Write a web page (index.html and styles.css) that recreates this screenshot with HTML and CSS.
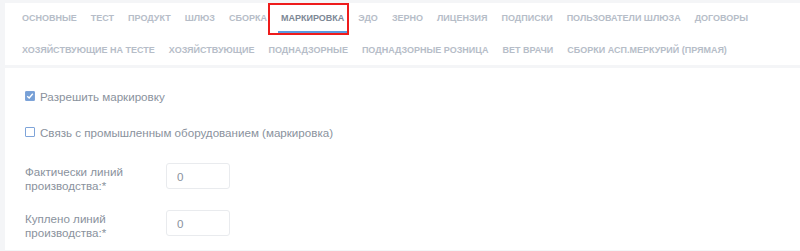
FILE: index.html
```html
<!DOCTYPE html>
<html>
<head>
    <title>Маркировка</title>
    <link rel="stylesheet" href="styles.css">
</head>
<body>
    <div class="tabs-card">
        <div class="tabs">
            <a class="tab">Основные</a>
            <a class="tab">Тест</a>
            <a class="tab">Продукт</a>
            <a class="tab">Шлюз</a>
            <a class="tab">Сборка</a>
            <a class="tab active">Маркировка</a>
            <a class="tab">ЭДО</a>
            <a class="tab">Зерно</a>
            <a class="tab">Лицензия</a>
            <a class="tab">Подписки</a>
            <a class="tab">Пользователи шлюза</a>
            <a class="tab">Договоры</a>
            <a class="tab">Хозяйствующие на тесте</a>
            <a class="tab">Хозяйствующие</a>
            <a class="tab">Поднадзорные</a>
            <a class="tab">Поднадзорные розница</a>
            <a class="tab">Вет врачи</a>
            <a class="tab">Сборки АСП.Меркурий (прямая)</a>
        </div>
    </div>

    <div class="content-card">
        <label class="check-row">
            <span class="checkbox checked">
                <svg width="8" height="8" viewBox="0 0 8 8"><path d="M1.2 4.2 L3.2 6 L6.8 1.8" fill="none" stroke="#fff" stroke-width="1.4"/></svg>
            </span>
            Разрешить маркировку
        </label>
        <label class="check-row">
            <span class="checkbox"></span>
            Связь с промышленным оборудованием (маркировка)
        </label>

        <div class="form-row">
            <div class="form-label">Фактически линий производства:*</div>
            <input type="text" class="form-input" value="0">
        </div>
        <div class="form-row">
            <div class="form-label">Куплено линий производства:*</div>
            <input type="text" class="form-input" value="0">
        </div>
    </div>
</body>
</html>
```

FILE: styles.css
```css
body {
    margin: 0;
    padding: 3px 0 0 5px;
    background-color: #f4f5f7;
    font-family: "Liberation Sans", Arial, sans-serif;
    overflow: hidden;
}
.tabs-card {
    background-color: white;
    padding: 2px 0 0 14px;
}
.tabs {
    display: flex;
    flex-wrap: wrap;
    column-gap: 8px;
    row-gap: 4px;
}
.tab {
    padding: 0 3px;
    line-height: 26px;
    border-bottom: 2px solid transparent;
    font-size: 9px;
    font-weight: bold;
    text-transform: uppercase;
    color: #b6bdc8;
    white-space: nowrap;
}
.tab.active {
    position: relative;
    color: #7d8896;
    border-bottom-color: #5b9be0;
}
.tab.active::after {
    content: "";
    position: absolute;
    left: -10px;
    right: -2px;
    top: -2px;
    bottom: -4px;
    border: 2px solid #ee1c1c;
}
.content-card {
    margin-top: 3px;
    background-color: white;
    padding: 19px 0 0 20px;
    height: 182px;
    box-sizing: border-box;
}
.check-row {
    display: flex;
    align-items: center;
    height: 18px;
    font-size: 11.6px;
    color: #8a929d;
}
.check-row + .check-row {
    margin-top: 18px;
    margin-bottom: 22px;
}
.checkbox {
    width: 8px;
    height: 8px;
    border: 1px solid #7ea4d9;
    border-radius: 1px;
    margin-right: 5px;
    display: flex;
    align-items: center;
    justify-content: center;
    background-color: white;
}
.checkbox.checked {
    background-color: #77a0d6;
}
.form-row {
    display: flex;
    align-items: flex-start;
    height: 26px;
    margin-bottom: 21px;
}
.form-label {
    width: 141px;
    padding-top: 2px;
    font-size: 11.6px;
    line-height: 14px;
    color: #8a929d;
}
.form-input {
    width: 64px;
    height: 26px;
    box-sizing: border-box;
    border: 1px solid #e9ebee;
    border-radius: 3px;
    padding: 0 10px;
    font-family: "Liberation Sans", Arial, sans-serif;
    font-size: 11.6px;
    color: #8a929d;
}
```
